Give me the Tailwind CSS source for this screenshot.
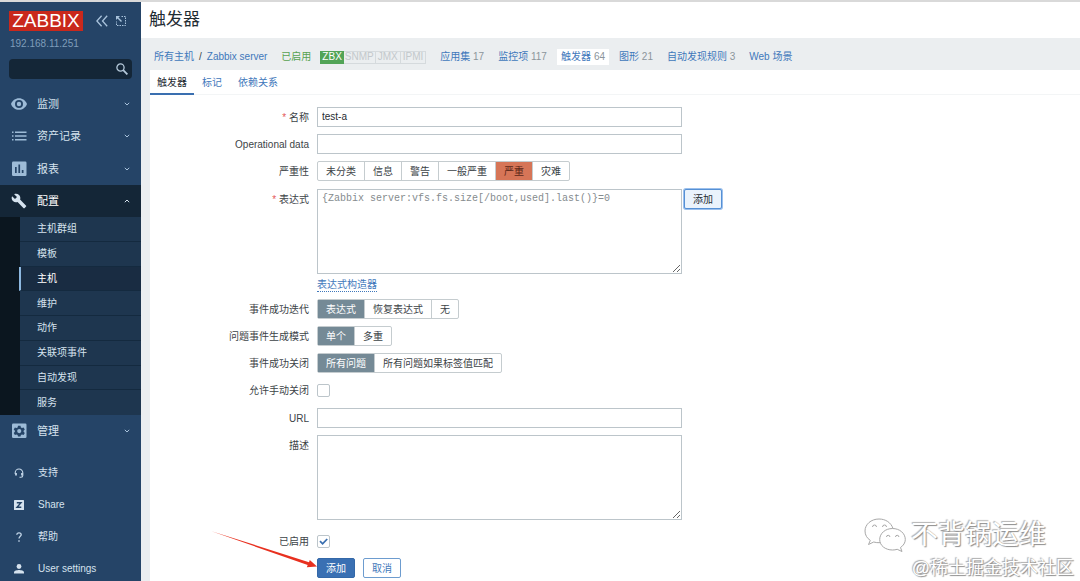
<!DOCTYPE html>
<html lang="zh-CN">
<head>
<meta charset="utf-8">
<meta name="viewport" content="width=device-width, initial-scale=1">
<title>触发器</title>
<script src="https://cdn.jsdelivr.net/npm/@tailwindcss/browser@4"></script>
</head>
<body class="flex min-h-screen flex-col overflow-hidden border-t-2 border-[#d9d9d9] bg-white font-['Liberation_Sans','Noto_Sans_CJK_SC',sans-serif] text-[10px] leading-5 text-[#3c4347]">
<div class="relative flex flex-1">
  <aside class="w-[141px] shrink-0 bg-[#254467] text-[#d5e2ee]">
    <div class="flex items-center px-[9px] pt-[9px]">
      <a href="#" class="flex h-5 w-[74px] items-center justify-center bg-[#c9281c] text-[19px] leading-5 text-white">ZABBIX</a>
      <button type="button" aria-label="收起侧栏" class="ml-[13px]">
        <svg class="h-3 w-3" viewBox="0 0 12 12" fill="none" stroke="#a9c3dc" stroke-width="1.3"><path d="M5.6.8.9 6l4.7 5.2M11.2.8 6.500 6l4.700 5.200"/></svg>
      </button>
      <button type="button" aria-label="隐藏侧栏" class="ml-[7px]">
        <svg class="h-3 w-3" viewBox="0 0 12 12" fill="none" stroke="#a9c3dc"><path d="M6.500 1.500h4v9h-9v-4" stroke-dasharray="1.500 1"/><path d="M6.500 6.500 2 2" stroke-width="1.400"/><path d="M1 5V1h4z" fill="#a9c3dc" stroke="none"/></svg>
      </button>
    </div>
    <p class="px-[10px] pt-[3px] text-[#7f9dba]">192.168.11.251</p>
    <form class="mx-[9px] mt-[5px] flex h-5 items-center rounded-sm bg-[#142637]">
      <input type="text" aria-label="搜索" class="h-5 w-full min-w-0 flex-1 bg-transparent px-1 outline-none">
      <button type="button" aria-label="搜索" class="mr-1">
        <svg class="h-3 w-3" viewBox="0 0 12 12" fill="none" stroke="#b5c9da"><circle cx="4.500" cy="4.500" r="3.600" stroke-width="1.300"/><path d="m7.200 7.200 4.200 4.200" stroke-width="1.800"/></svg>
      </button>
    </form>
    <nav class="mt-[9px] text-[11px]">
      <a href="#" class="flex h-8 items-center px-[11px]">
        <svg class="h-4 w-4" viewBox="0 0 16 16"><path fill="#9dbbd7" fill-rule="evenodd" d="M8 2.200C4.400 2.200 1.200 4.500 0 8c1.200 3.500 4.400 5.800 8 5.800s6.800-2.300 8-5.800c-1.200-3.500-4.400-5.800-8-5.800zM8 4a4 4 0 1 1 0 8 4 4 0 0 1 0-8zm0 1.800a2.200 2.200 0 1 0 0 4.400 2.200 2.200 0 0 0 0-4.400z"/></svg>
        <span class="ml-[10px] flex-1">监测</span>
        <svg class="h-[6px] w-[6px]" viewBox="0 0 6 6" fill="none" stroke="#a9c3dc"><path d="m.8 1.800 2.200 2.200 2.200-2.200"/></svg>
      </a>
      <a href="#" class="flex h-8 items-center px-[11px]">
        <svg class="h-4 w-4" viewBox="0 0 16 16" fill="#9dbbd7"><path d="M1 3.500h1.500V5H1zM4 3.500h11.500V5H4zM1 7.200h1.500v1.500H1zM4 7.200h11.500v1.500H4zM1 11h1.500v1.500H1zM4 11h11.500v1.500H4z"/></svg>
        <span class="ml-[10px] flex-1">资产记录</span>
        <svg class="h-[6px] w-[6px]" viewBox="0 0 6 6" fill="none" stroke="#a9c3dc"><path d="m.8 1.800 2.200 2.200 2.200-2.200"/></svg>
      </a>
      <a href="#" class="mt-px flex h-8 items-center px-[11px]">
        <svg class="h-4 w-4" viewBox="0 0 16 16"><rect x="1" y=".5" width="14.500" height="14.500" rx="1.200" fill="#9dbbd7"/><path fill="#254467" d="M4 6h1.700v6H4zM7.400 3.500h1.700V12H7.400zM10.800 9h1.700v3h-1.700z"/></svg>
        <span class="ml-[10px] flex-1">报表</span>
        <svg class="h-[6px] w-[6px]" viewBox="0 0 6 6" fill="none" stroke="#a9c3dc"><path d="m.8 1.800 2.200 2.200 2.200-2.200"/></svg>
      </a>
      <a href="#" class="flex h-8 items-center bg-[#142637] px-[11px] text-white">
        <svg class="h-4 w-4" viewBox="0 0 24 24" fill="#d5e2ee"><path d="m22.700 19-9.100-9.100c.9-2.300.4-5-1.500-6.900-2-2-5-2.400-7.400-1.300L9 6 6 9 1.600 4.700C.4 7.100.9 10.100 2.900 12.100c1.900 1.900 4.600 2.400 6.900 1.500l9.100 9.100c.4.400 1 .4 1.400 0l2.300-2.300c.5-.4.5-1.100.1-1.400z"/></svg>
        <span class="ml-[10px] flex-1">配置</span>
        <svg class="h-[6px] w-[6px]" viewBox="0 0 6 6" fill="none" stroke="#d5e2ee"><path d="m.8 4.200 2.200-2.200 2.200 2.200"/></svg>
      </a>
      <div class="h-[198px] bg-[#0b161f] pl-5 text-[10px]">
        <div class="grid h-full auto-rows-fr divide-y divide-[#142a3f] bg-[#1e364f]">
          <a href="#" class="flex items-center pt-px pl-[17px]">主机群组</a>
          <a href="#" class="flex items-center pt-px pl-[17px]">模板</a>
          <a href="#" aria-current="page" class="-ml-px flex items-center border-l-2 border-l-[#8db8e0] bg-[#192c42] pt-px pl-4 text-white">主机</a>
          <a href="#" class="flex items-center pt-px pl-[17px]">维护</a>
          <a href="#" class="flex items-center pt-px pl-[17px]">动作</a>
          <a href="#" class="flex items-center pt-px pl-[17px]">关联项事件</a>
          <a href="#" class="flex items-center pt-px pl-[17px]">自动发现</a>
          <a href="#" class="flex items-center pt-px pl-[17px]">服务</a>
        </div>
      </div>
      <a href="#" class="flex h-8 items-center px-[11px]">
        <svg class="h-4 w-4" viewBox="0 0 16 16"><rect x="1" y=".5" width="14.500" height="14.500" rx="1.200" fill="#9dbbd7"/><path fill="#254467" fill-rule="evenodd" d="M7 2.800h2.500l.4 1.600 1.100.6 1.600-.5 1.200 2.100-1.200 1.200v.9l1.200 1.200-1.200 2.100-1.600-.5-1.100.6-.4 1.400H7l-.4-1.400-1.100-.6-1.600.5-1.200-2.100 1.200-1.200v-.9L2.700 6.600l1.200-2.100 1.600.5 1.100-.6zM8.250 6a2.100 2.100 0 1 0 0 4.200 2.100 2.100 0 0 0 0-4.200z"/></svg>
        <span class="ml-[10px] flex-1">管理</span>
        <svg class="h-[6px] w-[6px]" viewBox="0 0 6 6" fill="none" stroke="#a9c3dc"><path d="m.8 1.800 2.200 2.200 2.200-2.200"/></svg>
      </a>
    </nav>
    <nav class="mt-[10px]">
      <a href="#" class="flex h-8 items-center gap-[14px] pl-[14px]">
        <svg class="h-[10px] w-[10px]" viewBox="0 0 10 10" fill="none" stroke="#c3d6e8"><path d="M1.200 6V4.800a3.800 3.800 0 0 1 7.600 0V7.500c0 1-.7 1.700-1.800 1.700H5.500" stroke-width="1.100"/><path d="M2 5v2.600M8 5v2.600" stroke-width="1.800"/></svg>
        <span>支持</span>
      </a>
      <a href="#" class="flex h-8 items-center gap-[14px] pl-[14px]">
        <svg class="h-[10px] w-[10px]" viewBox="0 0 10 10"><rect width="10" height="10" rx=".6" fill="#d5e2ee"/><path d="M2.800 2.700h4.200L3 7.300h4.300" fill="none" stroke="#254467" stroke-width="1.400"/></svg>
        <span>Share</span>
      </a>
      <a href="#" class="flex h-8 items-center gap-[14px] pl-[14px]">
        <svg class="h-[10px] w-[10px]" viewBox="0 0 10 10"><path d="M2.800 2.800C2.900 1.500 3.800.8 5 .8s2.200.7 2.200 1.900C7.200 4.200 5 4.400 5 6.600" fill="none" stroke="#c3d6e8" stroke-width="1.300"/><path d="M4.300 8.200h1.400v1.500H4.300z" fill="#c3d6e8"/></svg>
        <span>帮助</span>
      </a>
      <a href="#" class="flex h-8 items-center gap-[14px] pl-[14px]">
        <svg class="h-[10px] w-[10px]" viewBox="0 0 10 10" fill="#d5e2ee"><circle cx="5" cy="2.500" r="2.400"/><path d="M0 9.500V8.300C0 6.700 3.300 6 5 6s5 .7 5 2.300v1.200z"/></svg>
        <span>User settings</span>
      </a>
    </nav>
  </aside>

  <div class="flex min-w-0 flex-1 flex-col bg-[#ebeef0]">
    <header class="flex h-9 items-center bg-white pl-2">
      <h1 class="text-[17px] leading-6 text-[#1f2c33]">触发器</h1>
    </header>
    <nav class="flex h-8 items-center whitespace-nowrap pt-[6px] pl-[13px] text-[#3f78bb]">
      <a href="#">所有主机</a>
      <span class="mx-[5px] text-[#3c4347]">/</span>
      <a href="#">Zabbix server</a>
      <span class="ml-[14px] text-[#57a251]">已启用</span>
      <span class="ml-[9px] flex h-[13px] items-center border border-[#d5dadd] leading-3 text-[#c3c8cb]">
        <span class="-my-px -ml-px flex h-[13px] items-center bg-[#52a457] px-[2px] text-white">ZBX</span>
        <span class="border-r border-[#d5dadd] px-px">SNMP</span>
        <span class="border-r border-[#d5dadd] px-[2px]">JMX</span>
        <span class="px-[2px]">IPMI</span>
      </span>
      <span class="ml-[14px] flex items-center gap-[14px]">
        <a href="#">应用集 <span class="text-[#8b959b]">17</span></a>
        <a href="#">监控项 <span class="text-[#8b959b]">117</span></a>
        <a href="#" aria-current="page" class="-mx-1 flex h-4 items-center gap-[3px] bg-white px-1">触发器 <span class="text-[#8b959b]">64</span></a>
        <a href="#">图形 <span class="text-[#8b959b]">21</span></a>
        <a href="#">自动发现规则 <span class="text-[#8b959b]">3</span></a>
        <a href="#">Web 场景</a>
      </span>
    </nav>
    <main class="ml-[9px] flex-1 bg-white">
      <div role="tablist" class="flex h-[25px] border-b border-[#f3f5f6] text-[#3f78bb]">
        <button type="button" role="tab" aria-selected="true" class="-mb-px border-b-2 border-[#3a6fb0] px-[7px] pt-[3px] text-[#1f2c33]">触发器</button>
        <button type="button" role="tab" class="px-2 pt-[2px]">标记</button>
        <button type="button" role="tab" class="px-2 pt-[2px]">依赖关系</button>
      </div>
      <form class="grid grid-cols-[159px_minmax(0,1fr)] gap-x-2 gap-y-[5px] pt-3 leading-[22px]">
        <label for="name" class="text-right"><span class="text-[#e45959]">*</span> 名称</label>
        <input id="name" type="text" value="test-a" class="h-5 w-full max-w-[365px] border border-[#bcc5ca] px-1 text-[#1f2c33]">

        <label for="opdata" class="text-right">Operational data</label>
        <input id="opdata" type="text" class="h-5 w-full max-w-[365px] border border-[#bcc5ca] px-1">

        <span id="severity" class="text-right">严重性</span>
        <div role="radiogroup" aria-labelledby="severity" class="mb-[3px] flex h-5 w-fit divide-x divide-[#c5cccf] rounded-xs border border-[#c5cccf] leading-5 whitespace-nowrap">
          <label class="px-2"><input type="radio" name="sev" class="sr-only">未分类</label>
          <label class="px-2"><input type="radio" name="sev" class="sr-only">信息</label>
          <label class="px-2"><input type="radio" name="sev" class="sr-only">警告</label>
          <label class="px-2"><input type="radio" name="sev" class="sr-only">一般严重</label>
          <label class="px-2 has-checked:bg-[#d67557] has-checked:text-[#5c2718]"><input type="radio" name="sev" class="sr-only" checked>严重</label>
          <label class="px-2"><input type="radio" name="sev" class="sr-only">灾难</label>
        </div>

        <label for="expr" class="text-right"><span class="text-[#e45959]">*</span> 表达式</label>
        <div>
          <div class="flex items-start gap-[2px]">
            <textarea id="expr" readonly class="h-[85px] w-full max-w-[365px] border border-[#bcc5ca] px-1 py-[2px] font-['Liberation_Mono',monospace] leading-[14px] text-[#858b8e]">{Zabbix server:vfs.fs.size[/boot,used].last()}=0</textarea>
            <button type="button" class="h-5 shrink-0 rounded-xs border border-[#5590d5] bg-[#eaf3fc] px-2 pt-[2px] leading-4 text-[#1f2c33] ring-1 ring-[#9cc0ec]">添加</button>
          </div>
          <div class="flex h-5 items-start pt-1">
            <a href="#" class="border-b border-dotted border-[#3f78bb] leading-[13px] text-[#3f78bb]">表达式构造器</a>
          </div>
        </div>

        <span id="recovery" class="text-right">事件成功迭代</span>
        <div role="radiogroup" aria-labelledby="recovery" class="flex h-5 w-fit divide-x divide-[#c5cccf] rounded-xs border border-[#c5cccf] leading-5 whitespace-nowrap">
          <label class="px-2 has-checked:bg-[#758a96] has-checked:text-white"><input type="radio" name="rec" class="sr-only" checked>表达式</label>
          <label class="px-2"><input type="radio" name="rec" class="sr-only">恢复表达式</label>
          <label class="px-2"><input type="radio" name="rec" class="sr-only">无</label>
        </div>

        <span id="mode" class="text-right">问题事件生成模式</span>
        <div role="radiogroup" aria-labelledby="mode" class="flex h-5 w-fit divide-x divide-[#c5cccf] rounded-xs border border-[#c5cccf] leading-5 whitespace-nowrap">
          <label class="px-2 has-checked:bg-[#758a96] has-checked:text-white"><input type="radio" name="mode" class="sr-only" checked>单个</label>
          <label class="px-2"><input type="radio" name="mode" class="sr-only">多重</label>
        </div>

        <span id="close" class="text-right">事件成功关闭</span>
        <div role="radiogroup" aria-labelledby="close" class="flex h-5 w-fit divide-x divide-[#c5cccf] rounded-xs border border-[#c5cccf] leading-5 whitespace-nowrap">
          <label class="px-2 has-checked:bg-[#758a96] has-checked:text-white"><input type="radio" name="close" class="sr-only" checked>所有问题</label>
          <label class="px-2"><input type="radio" name="close" class="sr-only">所有问题如果标签值匹配</label>
        </div>

        <label for="manual" class="text-right">允许手动关闭</label>
        <div class="mb-[3px] flex h-5 items-center">
          <input id="manual" type="checkbox" class="h-[13px] w-[13px] appearance-none rounded-xs border border-[#bcc5ca]">
        </div>

        <label for="url" class="text-right">URL</label>
        <input id="url" type="text" class="h-5 w-full max-w-[365px] border border-[#bcc5ca] px-1">

        <label for="desc" class="text-right">描述</label>
        <textarea id="desc" class="mb-[6px] h-[85px] w-full max-w-[365px] border border-[#bcc5ca] px-1"></textarea>

        <label for="enabled" class="text-right">已启用</label>
        <div class="grid h-5 w-fit items-center">
          <input id="enabled" type="checkbox" checked class="peer col-start-1 row-start-1 h-[13px] w-[13px] appearance-none rounded-xs border border-[#bcc5ca]">
          <svg class="pointer-events-none invisible col-start-1 row-start-1 h-[13px] w-[13px] peer-checked:visible" viewBox="0 0 13 13" fill="none" stroke="#3a6fb0" stroke-width="1.800"><path d="m3 6.200 2.600 2.600 4.600-4.800"/></svg>
        </div>

        <div class="col-start-2 flex gap-2">
          <button type="submit" class="h-5 rounded-xs border border-[#3468a8] bg-[#3a70b3] px-2 pt-[2px] leading-4 text-white">添加</button>
          <button type="button" class="h-5 rounded-xs border border-[#6d9ccf] bg-white px-2 pt-[2px] leading-4 text-[#3f78bb]">取消</button>
        </div>
      </form>
    </main>
  </div>

  <svg class="pointer-events-none absolute top-[526px] left-[208px] h-11 w-[112px]" viewBox="0 0 112 44"><path fill="#e8301f" d="m3.500 3.200 97.500 31 .8-2.200 7.200 6.500-10.200.8.9-2.300z"/></svg>

  <div class="pointer-events-none absolute right-[6px] bottom-[5px] flex flex-col items-end text-white">
    <div class="mr-7 mb-[3px] flex items-center gap-1 text-[27px] leading-9 [text-shadow:1px_1px_1px_#8c8c8c,-1px_-1px_1px_#b4b4b4]">
      <svg class="h-9 w-11" viewBox="0 0 44 36" fill="#fff" stroke="#a8a8a8" stroke-width="1"><path d="M16 2C8 2 2 7.400 2 14c0 4 2 7.200 5.300 9.400L5.500 27.500l5.200-2.500c2 .6 4 .8 6.300.7C31 25 31 18 30 11.500 28 5.500 22.500 2 16 2z"/><path d="M29.500 11.500c-7.200 0-12.800 4.900-12.800 11S22.300 33 29.500 33c1.700 0 3.200-.2 4.700-.7l4.800 2.200-1.500-4c3-2 4.800-4.800 4.800-8 0-6.100-5.600-11-12.800-11z"/><path fill="none" d="M9.500 10a2 2 0 0 1 4 0M19.500 10a2 2 0 0 1 4 0M23.500 20a1.700 1.700 0 0 1 3.400 0M32.500 20a1.700 1.700 0 0 1 3.400 0"/></svg>
      <span>不背锅运维</span>
    </div>
    <div class="text-[18px] leading-6 [text-shadow:1px_1px_1px_#8c8c8c,-1px_-1px_1px_#a8a8a8]">@稀土掘金技术社区</div>
  </div>
</div>
</body>
</html>
